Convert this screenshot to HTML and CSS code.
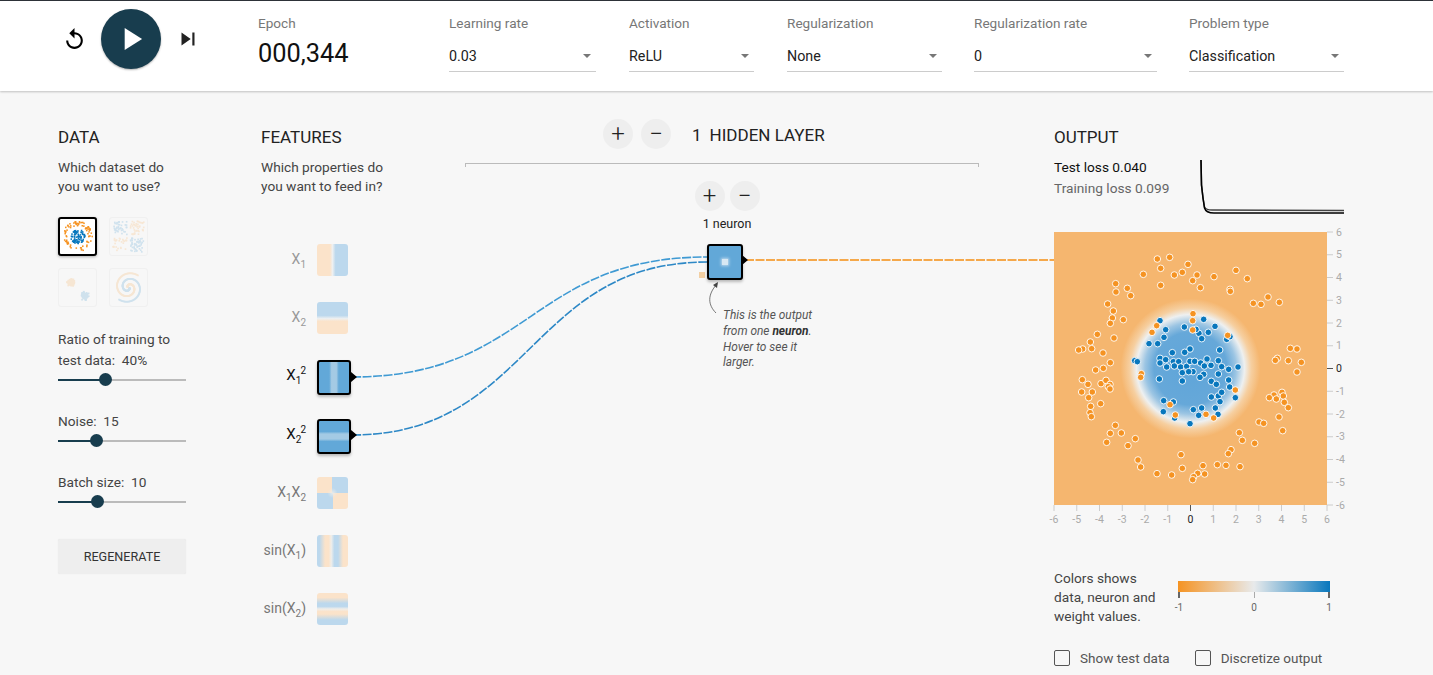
FILE: index.html
```html
<!DOCTYPE html>
<html lang="en">
<head>
  <meta charset="UTF-8">
  <title>Tensorflow Playground</title>
  <link rel="stylesheet" href="styles.css">
</head>
<body>
  <header id="top">
    <div class="controls">
      <svg class="reset" viewBox="0 0 24 24"><path d="M12 5V1L7 6l5 5V7c3.31 0 6 2.69 6 6s-2.69 6-6 6-6-2.69-6-6H4c0 4.42 3.58 8 8 8s8-3.58 8-8-3.58-8-8-8z"/></svg>
      <div class="play"><svg viewBox="0 0 24 24"><path d="M8 5v14l11-7z"/></svg></div>
      <svg class="step" viewBox="0 0 24 24"><path d="M6 18l8.5-6L6 6v12zM16 6v12h2V6h-2z"/></svg>
    </div>
    <div class="epoch">
      <label>Epoch</label>
      <div class="epoch-num">000,344</div>
    </div>
    <div class="selects">
      <div class="sel w147"><label>Learning rate</label><div class="sel-val"><span>0.03</span><i></i></div></div>
      <div class="sel w125"><label>Activation</label><div class="sel-val"><span>ReLU</span><i></i></div></div>
      <div class="sel w155"><label>Regularization</label><div class="sel-val"><span>None</span><i></i></div></div>
      <div class="sel w183"><label>Regularization rate</label><div class="sel-val"><span>0</span><i></i></div></div>
      <div class="sel w155"><label>Problem type</label><div class="sel-val"><span>Classification</span><i></i></div></div>
    </div>
  </header>

  <main id="main">
    <section class="col-data">
      <h4>DATA</h4>
      <p>Which dataset do<br>you want to use?</p>
      <div class="datasets">
        <svg class="ds selected" id="ds-circle" viewBox="0 0 36 36"></svg>
        <svg class="ds" id="ds-xor" viewBox="0 0 36 36"></svg>
        <svg class="ds" id="ds-gauss" viewBox="0 0 36 36"></svg>
        <svg class="ds" id="ds-spiral" viewBox="0 0 36 36"></svg>
      </div>
      <div class="slider-block first">
        <div class="slider-label">Ratio of training to<br>test data:&nbsp; 40%</div>
        <div class="track"><div class="fill" style="width:37%"></div><div class="knob" style="left:37%"></div></div>
      </div>
      <div class="slider-block">
        <div class="slider-label">Noise:&nbsp; 15</div>
        <div class="track"><div class="fill" style="width:30%"></div><div class="knob" style="left:30%"></div></div>
      </div>
      <div class="slider-block">
        <div class="slider-label">Batch size:&nbsp; 10</div>
        <div class="track"><div class="fill" style="width:30.5%"></div><div class="knob" style="left:30.5%"></div></div>
      </div>
      <button class="regen">REGENERATE</button>
    </section>

    <section class="col-features">
      <h4>FEATURES</h4>
      <p>Which properties do<br>you want to feed in?</p>
      <div class="features">
        <div class="feature"><span class="flabel faint">X<sub>1</sub></span><div class="thumb h-x1"></div></div>
        <div class="feature"><span class="flabel faint">X<sub>2</sub></span><div class="thumb h-x2"></div></div>
        <div class="feature on"><span class="flabel">X<sub>1</sub><sup>2</sup></span><div class="thumb h-x1sq"></div></div>
        <div class="feature on"><span class="flabel">X<sub>2</sub><sup>2</sup></span><div class="thumb h-x2sq"></div></div>
        <div class="feature"><span class="flabel">X<sub>1</sub>X<sub>2</sub></span><div class="thumb h-xy"></div></div>
        <div class="feature"><span class="flabel">sin(X<sub>1</sub>)</span><div class="thumb h-sin1"></div></div>
        <div class="feature"><span class="flabel">sin(X<sub>2</sub>)</span><div class="thumb h-sin2"></div></div>
      </div>
    </section>

    <section class="col-network">
      <div class="layer-head">
        <button class="round">+</button>
        <button class="round">&minus;</button>
        <span class="layer-count">1</span>
        <span class="layer-name">HIDDEN LAYER</span>
      </div>
      <div class="bracket"></div>
      <div class="neuron-head">
        <div class="neuron-btns">
          <button class="round">+</button>
          <button class="round">&minus;</button>
        </div>
        <div class="neuron-count">1 neuron</div>
      </div>
      <div class="node"><div class="node-dot"></div></div>
      <div class="weight-dot"></div>
      <div class="callout">This is the output from one <b>neuron</b>. Hover to see it larger.</div>
    </section>

    <section class="col-output">
      <h4>OUTPUT</h4>
      <div class="loss-row">
        <div class="loss">
          <div class="test-loss">Test loss 0.040</div>
          <div class="train-loss">Training loss 0.099</div>
        </div>
        <svg class="loss-chart" viewBox="0 0 144 55">
          <path d="M1 0 L1.5 25 L3 38 L4.5 47 Q6 50 12 50 L144 50.5" fill="none" stroke="#444" stroke-width="1.5"/>
          <path d="M1 0 L1.5 25 L3 38 L4.5 48 Q6 53 14 53 L144 53" fill="none" stroke="#000" stroke-width="1.5"/>
        </svg>
      </div>
      <svg id="plot" width="300" height="300" viewBox="0 0 300 300">
        <defs>
          <radialGradient id="heat" gradientUnits="userSpaceOnUse" cx="136.5" cy="136.5" r="76">
            <stop offset="0" stop-color="#5fa5d9"/>
            <stop offset="0.48" stop-color="#66a8d9"/>
            <stop offset="0.6" stop-color="#9cc5e3"/>
            <stop offset="0.71" stop-color="#eef0f0"/>
            <stop offset="0.8" stop-color="#f6cfa0"/>
            <stop offset="0.92" stop-color="#f5b66f"/>
          </radialGradient>
        </defs>
        <rect width="273" height="273" fill="url(#heat)"/>
        <g id="axes"></g>
        <g id="points"></g>
      </svg>
      <div class="legend">
        <div class="legend-text">Colors shows<br>data, neuron and<br>weight values.</div>
        <div class="scale">
          <div class="scale-bar"></div>
          <div class="scale-ticks"><span><i></i>-1</span><span><i class="light"></i>0</span><span><i></i>1</span></div>
        </div>
      </div>
      <div class="checks">
        <div class="check"><span class="box"></span>Show test data</div>
        <div class="check"><span class="box"></span>Discretize output</div>
      </div>
    </section>
  </main>

  <!-- wires sit over the page, coordinates are page pixels -->
  <svg id="wires" width="1433" height="675" viewBox="0 0 1433 675">
    <path class="wire" d="M352 377 C530 377 530 257 707 257" stroke="#3f9ad3"/>
    <path class="wire" d="M352 435 C530 435 530 262 707 262" stroke="#2d88c6"/>
    <path class="wire out" d="M745 260 L1054 260"/>
    <path d="M351 372 L357 377 L351 382z M351 430 L357 435 L351 440z M742 255 L748 260 L742 265z"/>
    <path class="note-line" d="M717 284 C707 295 708 305 716 313"/>
    <path d="M718 282 L713 285 L717 288z" fill="#444"/>
  </svg>

  <script src="app.js"></script>
</body>
</html>
```

FILE: styles.css
```css
html, body {
  margin: 0;
  padding: 0;
  height: 100%;
  overflow: hidden;
  background: #f7f7f7;
  font-family: Roboto, "Liberation Sans", sans-serif;
  color: #333;
}

#top {
  height: 90px;
  background: #fff;
  border-top: 1px solid #2d3238;
  box-shadow: 0 1px 2px rgba(0,0,0,0.22);
  display: flex;
  position: relative;
  z-index: 3;
}

.controls {
  width: 258px;
  padding-left: 62px;
  box-sizing: border-box;
  display: flex;
  align-items: center;
  height: 76px;
}

.reset {
  width: 25px;
  height: 25px;
  margin-right: 14px;
}

.play {
  width: 60px;
  height: 60px;
  border-radius: 50%;
  background: #183d4e;
  box-shadow: 0 1px 2px rgba(0,0,0,0.3);
  display: flex;
  align-items: center;
  justify-content: center;
  margin-right: 14px;
}

.play svg {
  width: 38px;
  height: 38px;
  fill: #fff;
}

.step {
  width: 26px;
  height: 26px;
  fill: #222;
}

label {
  display: block;
  font-size: 13.6px;
  line-height: 16px;
  color: #777;
}

.epoch {
  width: 191px;
  padding-top: 14px;
}

.epoch-num {
  font-size: 25.4px;
  line-height: 28px;
  color: #111;
  margin-top: 8px;
}

.selects {
  display: flex;
  gap: 33px;
  padding-top: 14px;
}

.w147 { width: 147px; }
.w125 { width: 125px; }
.w155 { width: 155px; }
.w183 { width: 183px; }

.selects .sel:nth-child(3), .selects .sel:nth-child(4) {
  margin-right: -1px;
}

.sel-val {
  display: flex;
  justify-content: space-between;
  align-items: center;
  height: 31px;
  margin-top: 10px;
  font-size: 14.3px;
  color: #222;
  border-bottom: 1px solid #ccc;
  box-sizing: border-box;
}

.sel-val i {
  width: 0;
  height: 0;
  margin-right: 5px;
  border-left: 4.5px solid transparent;
  border-right: 4.5px solid transparent;
  border-top: 4px solid #777;
}

#main {
  display: grid;
  grid-template-columns: 203px 204px 514px 290px;
  padding: 28px 0 0 58px;
  height: 555px;
}

h4 {
  margin: 9px 0 11px;
  font-size: 17px;
  font-weight: 400;
  line-height: 19px;
  color: #222;
}

p {
  margin: 0;
  font-size: 13.7px;
  line-height: 19px;
  color: #444;
}

/* data column */
.col-data {
  width: 128px;
}

.datasets {
  display: grid;
  grid-template-columns: 39px 39px;
  grid-auto-rows: 39px;
  column-gap: 12px;
  row-gap: 12px;
  margin-top: 21px;
}

.ds {
  width: 39px;
  height: 39px;
  box-sizing: border-box;
  border: 1px solid #f0f0f0;
  border-radius: 3px;
}

.ds g {
  opacity: 0.16;
}

.ds.selected {
  background: #fff;
  border: 2px solid #000;
  box-shadow: 0 1px 3px rgba(0,0,0,0.3);
}

.ds.selected g {
  opacity: 1;
}

.slider-block {
  margin-top: 30px;
}

.slider-block.first {
  margin-top: 22px;
}

.slider-label {
  font-size: 13.7px;
  line-height: 21px;
  color: #444;
}

.track {
  position: relative;
  height: 2px;
  background: #bbb;
  margin-top: 8px;
}

.fill {
  height: 2px;
  background: #183d4e;
}

.knob {
  position: absolute;
  top: -6px;
  width: 13px;
  height: 13px;
  margin-left: -6px;
  border-radius: 50%;
  background: #183d4e;
}

.regen {
  display: block;
  width: 128px;
  height: 35px;
  margin-top: 36px;
  border: none;
  background: #eee;
  border-radius: 2px;
  font: 12.6px Roboto, "Liberation Sans", sans-serif;
  color: #333;
  box-shadow: 0 0 1px rgba(0,0,0,0.1);
}

/* features */
.features {
  margin-top: 48px;
}

.feature {
  display: flex;
  height: 58.2px;
  align-items: flex-start;
}

.flabel {
  width: 45px;
  padding-top: 6px;
  font-size: 14px;
  line-height: 18px;
  text-align: right;
  color: #777;
  white-space: nowrap;
}

.flabel.faint {
  color: #999;
}

.flabel sub, .flabel sup {
  font-size: 10px;
  line-height: 0;
}

.flabel sup {
  margin-left: -1px;
}

.feature.on .flabel {
  color: #111;
  font-size: 15px;
}

.thumb {
  width: 31px;
  height: 32px;
  margin-left: 11px;
  border-radius: 3px;
  position: relative;
  z-index: 2;
}

.feature.on .thumb {
  width: 34px;
  height: 35px;
  box-sizing: border-box;
  border: 2px solid #000;
  box-shadow: 0 2px 3px rgba(0,0,0,0.25);
}

.h-x1 { background: linear-gradient(90deg, #fbe3ca 0 42%, #eef0f1 50%, #bcd8ed 60% 100%); }
.h-x2 { background: linear-gradient(180deg, #bcd8ed 0 42%, #eef0f1 52%, #fbe3ca 60% 100%); }
.h-x1sq { background: linear-gradient(90deg, #62a8d8 0 34%, #a4cae4 42% 58%, #62a8d8 66% 100%); }
.h-x2sq { background: linear-gradient(180deg, #62a8d8 0 34%, #a4cae4 42% 58%, #62a8d8 66% 100%); }
.h-xy {
  background:
    radial-gradient(circle at 50% 50%, rgba(236,236,234,0.9) 0, rgba(236,236,234,0) 5px),
    conic-gradient(#bcd8ed 0 90deg, #fbe3ca 90deg 180deg, #bcd8ed 180deg 270deg, #fbe3ca 270deg 360deg);
}
.h-sin1 { background: linear-gradient(90deg, #bcd8ed 0 8%, #fbe3ca 26% 38%, #f0eeea 46%, #bcd8ed 56% 68%, #fbe3ca 84% 100%); }
.h-sin2 { background: linear-gradient(180deg, #fbe3ca 0 14%, #bcd8ed 32% 42%, #f0eeea 50%, #fbe3ca 58% 66%, #bcd8ed 84% 100%); }

/* network */
.col-network {
  position: relative;
}

.layer-head {
  display: flex;
  align-items: center;
  padding-left: 138px;
  height: 30px;
  gap: 8px;
}

.round {
  width: 30px;
  height: 30px;
  padding: 0;
  border: none;
  border-radius: 50%;
  background: #eee;
  font: 300 24px/28px Roboto, "Liberation Sans", sans-serif;
  color: #222;
  text-align: center;
}

.layer-count {
  margin: 2px 0 0 13px;
  font-size: 17px;
  color: #222;
}

.layer-name {
  margin-top: 2px;
  font-size: 17px;
  color: #222;
}

.bracket {
  height: 3px;
  margin-top: 14px;
  border: 1px solid #bbb;
  border-bottom: none;
}

.neuron-head {
  width: 80px;
  margin-top: 14px;
  margin-left: 222px;
  text-align: center;
}

.neuron-btns {
  display: flex;
  justify-content: center;
  gap: 5px;
}

.neuron-count {
  margin-top: 6px;
  font-size: 12.5px;
  line-height: 14px;
  color: #222;
}

.node {
  position: absolute;
  left: 242px;
  top: 125px;
  width: 36px;
  height: 36px;
  box-sizing: border-box;
  border: 2px solid #000;
  border-radius: 3px;
  background: #62a8d8;
  box-shadow: 0 2px 3px rgba(0,0,0,0.25);
  display: flex;
  align-items: center;
  justify-content: center;
  z-index: 2;
}

.node-dot {
  width: 6px;
  height: 6px;
  background: #d8e8f3;
  box-shadow: 0 0 3px 1px #bcd8ed;
}

.weight-dot {
  position: absolute;
  left: 234px;
  top: 153px;
  width: 6px;
  height: 6px;
  background: #f2cfa3;
}

.callout {
  position: absolute;
  left: 258px;
  top: 189px;
  width: 100px;
  font-size: 11.9px;
  font-style: italic;
  line-height: 15.8px;
  color: #555;
}

.callout b {
  color: #333;
}

/* output */
.col-output {
  margin-left: 75px;
  width: 290px;
  position: relative;
}

.loss-row {
  display: flex;
  height: 62px;
  margin-top: -1px;
}

.loss {
  width: 146px;
  font-size: 13.7px;
  line-height: 21px;
}

.test-loss {
  color: #111;
}

.train-loss {
  color: #666;
}

.loss-chart {
  width: 144px;
  height: 55px;
  margin-top: 3px;
  overflow: visible;
}

#plot {
  display: block;
  overflow: visible;
  margin-top: 13px;
}

#plot text {
  font-size: 10.5px;
  fill: #aaa;
  font-family: Roboto, "Liberation Sans", sans-serif;
}

#plot text.zero {
  fill: #222;
}

.legend {
  display: flex;
  margin-top: 37px;
}

.legend-text {
  width: 124px;
  font-size: 13.7px;
  line-height: 19px;
  color: #444;
}

.scale {
  width: 152px;
  padding-top: 12px;
}

.scale-bar {
  height: 11px;
  background: linear-gradient(90deg, #f59322, #e8eaeb 50%, #0877bd);
}

.scale-ticks {
  display: flex;
  justify-content: space-between;
  font-size: 10px;
  line-height: 12px;
  color: #666;
}

.scale-ticks span {
  width: 2px;
  display: flex;
  flex-direction: column;
  align-items: center;
}

.scale-ticks i {
  width: 2px;
  height: 6px;
  background: #666;
  margin-bottom: 4px;
}

.scale-ticks i.light {
  width: 1px;
  background: #aaa;
}

.checks {
  display: flex;
  margin-top: 24px;
}

.check {
  display: flex;
  align-items: center;
  font-size: 13.5px;
  color: #555;
  margin-right: 25px;
  white-space: nowrap;
}

.box {
  width: 16px;
  height: 16px;
  box-sizing: border-box;
  border: 1.5px solid #555;
  border-radius: 2px;
  margin-right: 10px;
}

#wires {
  position: absolute;
  top: 0;
  left: 0;
  pointer-events: none;
  z-index: 1;
}

.wire {
  fill: none;
  stroke-width: 1.6;
  stroke-dasharray: 9 1.5;
}

.wire.out {
  stroke: #f5a84a;
  stroke-width: 2;
}

.note-line {
  fill: none;
  stroke: #555;
  stroke-width: 0.8;
}
```

FILE: app.js
```js
const NS = 'http://www.w3.org/2000/svg';

function el(parent, name, attrs, text) {
  const node = document.createElementNS(NS, name);
  for (const k in attrs) node.setAttribute(k, attrs[k]);
  if (text !== undefined) node.textContent = text;
  parent.appendChild(node);
  return node;
}

const ORANGE = '#f59322';
const BLUE = '#0877bd';

// read off the picture: [page x offset, page y offset, points at 3x]
const orange = [
  [1040, 225, [352,102, 389,97, 362,130, 444,118, 310,148, 403,150, 427,142, 471,150, 458,167, 362,181, 481,188, 227,176, 228,201, 262,190, 272,212, 203,237, 220,258, 217,279, 250,284, 211,295, 172,328, 222,339, 151,351, 155,371, 128,372, 116,375, 189,384, 211,413, 190,430, 167,435]],
  [1190, 225, [138,136, 72,155, 172,161, 120,193, 121,199, 190,235, 213,238, 234,216, 268,232, 301,370, 321,372, 262,400, 256,406, 295,407, 334,412, 321,441]],
  [1040, 370, [127,29, 144,43, 183,41, 198,31, 210,43, 205,50, 210,57, 125,66, 157,66, 146,83, 152,109, 182,101, 150,128, 154,140, 226,166, 211,190, 244,189, 286,206, 200,217, 264,227, 294,270, 302,291, 351,311, 395,315, 423,254, 427,295, 489,287, 473,310, 494,312, 461,320, 458,329]],
  [1190, 370, [276,67, 252,75, 238,83, 259,87, 280,78, 283,97, 295,113, 267,141, 207,156, 221,160, 278,182, 148,188, 157,211, 194,220, 123,239, 115,251, 82,284, 108,286, 150,290]],
  [1110, 290, [249,71, 248,92, 140,107, 126,127, 248,120, 353,136, 94,251, 92,262, 180,344, 376,300, 288,373, 311,384, 196,375]]
];

const blue = [
  [1110, 290, [150,92, 167,119, 223,111, 281,88, 315,109, 295,127, 267,130, 258,118, 275,146, 162,142, 117,161, 143,161, 350,148, 360,140, 329,180, 240,177, 224,187, 187,188, 150,205, 167,209, 150,219, 190,215, 206,215, 170,231, 193,228, 212,231, 230,229, 240,214, 254,214, 272,219, 291,207, 325,212, 303,226, 283,228, 335,230, 356,238, 384,231, 217,248, 249,245, 236,245, 281,253, 270,262, 325,252, 148,267, 217,273, 304,274, 319,283, 356,270, 359,291, 74,212, 82,215, 304,321, 325,318, 330,335, 335,307, 376,323, 161,332, 190,336, 160,365, 250,359, 275,354, 316,354, 266,376, 324,373, 194,384, 240,401]]
];

const PLOT_X = 1054;
const PLOT_Y = 232;

function drawPoints(g, groups, color) {
  for (const [ox, oy, pts] of groups) {
    for (let i = 0; i < pts.length; i += 2) {
      el(g, 'circle', {
        cx: ox + pts[i] / 3 - PLOT_X,
        cy: oy + pts[i + 1] / 3 - PLOT_Y,
        r: 3.3,
        fill: color,
        stroke: '#fff',
        'stroke-width': 1,
        'stroke-opacity': 0.9
      });
    }
  }
}

const pointsG = document.getElementById('points');
drawPoints(pointsG, blue, BLUE);
drawPoints(pointsG, orange, ORANGE);

// axes
const axes = document.getElementById('axes');
const size = 273;
for (let v = -6; v <= 6; v++) {
  const p = (v + 6) / 12 * size;
  const zero = v === 0;
  const tick = zero ? '#555' : '#ccc';
  el(axes, 'line', { x1: p, x2: p, y1: size, y2: size + 6, stroke: tick });
  el(axes, 'text', { x: p, y: size + 18, 'text-anchor': 'middle', class: zero ? 'zero' : '' }, v);
  el(axes, 'line', { x1: size, x2: size + 6, y1: size - p, y2: size - p, stroke: tick });
  el(axes, 'text', { x: size + 9, y: size - p + 3.5, class: zero ? 'zero' : '' }, v);
}

// dataset thumbnails, seeded so that the picture stays the same
let seed = 7;
function rnd() {
  seed = (seed * 16807) % 2147483647;
  return seed / 2147483647;
}
function gauss() {
  return (rnd() + rnd() + rnd() - 1.5) / 1.5;
}
function dots(id, list) {
  const svg = document.getElementById(id);
  const g = el(svg, 'g', {});
  for (const [x, y, c] of list) {
    el(g, 'rect', { x: x - 0.8, y: y - 0.8, width: 1.6, height: 1.6, fill: c });
  }
}

const circle = [];
for (let i = 0; i < 80; i++) {
  const a = rnd() * Math.PI * 2;
  const r = 11 + rnd() * 4.5;
  circle.push([18 + Math.cos(a) * r, 18 + Math.sin(a) * r, ORANGE]);
  const a2 = rnd() * Math.PI * 2;
  const r2 = Math.sqrt(rnd()) * 7.5;
  circle.push([18 + Math.cos(a2) * r2, 18 + Math.sin(a2) * r2, BLUE]);
}
dots('ds-circle', circle);

const xor = [];
for (let i = 0; i < 200; i++) {
  const x = 3 + rnd() * 30;
  const y = 3 + rnd() * 30;
  if (Math.abs(x - 18) < 1.5 || Math.abs(y - 18) < 1.5) continue;
  xor.push([x, y, (x < 18) === (y < 18) ? BLUE : ORANGE]);
}
dots('ds-xor', xor);

const blobs = [];
for (let i = 0; i < 80; i++) {
  blobs.push([12 + gauss() * 5, 13 + gauss() * 5, ORANGE]);
  blobs.push([25 + gauss() * 5, 26 + gauss() * 5, BLUE]);
}
dots('ds-gauss', blobs);

const spiral = [];
for (let i = 0; i < 160; i++) {
  const t = i / 160 * 2.6 * Math.PI + 0.4;
  const r = t * 1.75;
  spiral.push([18 + Math.cos(t) * r, 18 + Math.sin(t) * r, BLUE]);
  spiral.push([18 - Math.cos(t) * r, 18 - Math.sin(t) * r, ORANGE]);
}
dots('ds-spiral', spiral);
```
